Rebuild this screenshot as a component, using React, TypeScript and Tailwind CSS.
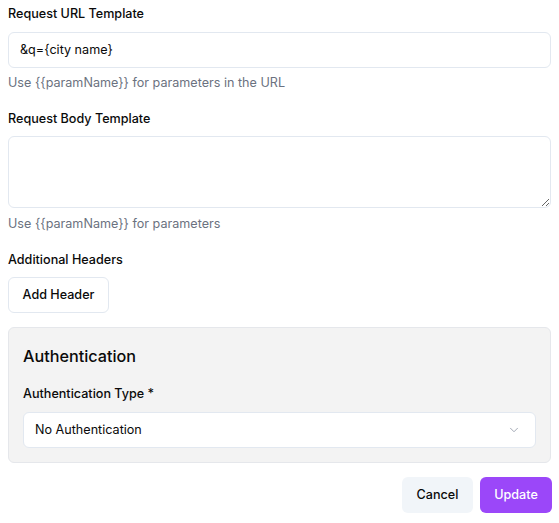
import React from "react";

export default function App() {
  return (
    <div className="w-[559px] min-h-[523px] bg-white px-2 pt-1 text-[#0a0a0a]" style={{ fontFamily: "Inter, 'Liberation Sans', sans-serif" }}>
      <div className="flex flex-col">
        <label className="text-[12.6px] leading-5 font-medium">Request URL Template</label>
        <div className="mt-2 h-9 rounded-md border border-[#e2e8f0] bg-white px-[11px] flex items-center text-[12.6px]">&amp;q={"{"}city name{"}"}</div>
        <p className="mt-[5px] text-[12.6px] leading-5 text-[#6b7280]">Use {"{{paramName}}"} for parameters in the URL</p>

        <label className="mt-4 text-[12.6px] leading-5 font-medium">Request Body Template</label>
        <textarea className="mt-[7px] h-[72px] rounded-md border border-[#e2e8f0] bg-white px-3 py-2 text-[12.6px] outline-none resize-y block" />
        <p className="mt-[6px] text-[12.6px] leading-5 text-[#6b7280]">Use {"{{paramName}}"} for parameters</p>

        <label className="mt-4 text-[12.6px] leading-5 font-medium">Additional Headers</label>
        <div className="mt-[7px]">
          <button className="h-9 w-[101px] rounded-md border border-[#e2e8f0] bg-white text-[12.6px] font-medium">Add Header</button>
        </div>

        <div className="mt-[14px] rounded-md border border-[#e5e7eb] bg-[#f3f3f3] p-[14px] flex flex-col">
          <h3 className="text-[16.2px] leading-7 font-medium">Authentication</h3>
          <label className="mt-[14px] text-[12.6px] leading-5 font-medium">Authentication Type *</label>
          <div className="mt-2 h-9 rounded-md border border-[#e2e8f0] bg-white pl-[11px] pr-[14px] flex items-center justify-between text-[12.6px]">
            <span>No Authentication</span>
            <svg width="14" height="14" viewBox="0 0 24 24" fill="none" stroke="#9ca3af" strokeWidth="1.6" strokeLinecap="round" strokeLinejoin="round">
              <path d="m6 9 6 6 6-6" />
            </svg>
          </div>
        </div>

        <div className="mt-[14px] -mr-px flex justify-end gap-[7px]">
          <button className="h-9 w-[71px] rounded-md bg-[#f1f5f9] text-[12.6px] font-medium">Cancel</button>
          <button className="h-9 w-[72px] rounded-md bg-[#9b47f9] text-[12.6px] font-medium text-white">Update</button>
        </div>
      </div>
    </div>
  );
}
